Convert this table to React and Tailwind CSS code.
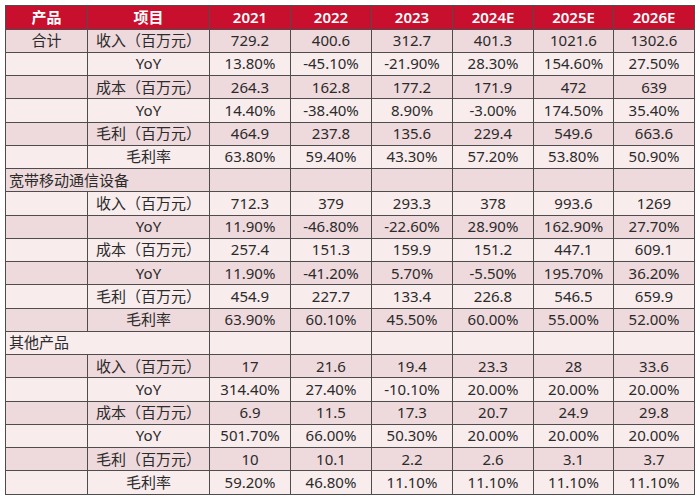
import React from "react";

const years = ["2021", "2022", "2023", "2024E", "2025E", "2026E"];

const rows = [
  { p: "合计", i: "收入（百万元）", v: ["729.2", "400.6", "312.7", "401.3", "1021.6", "1302.6"] },
  { p: "", i: "YoY", v: ["13.80%", "-45.10%", "-21.90%", "28.30%", "154.60%", "27.50%"] },
  { p: "", i: "成本（百万元）", v: ["264.3", "162.8", "177.2", "171.9", "472", "639"] },
  { p: "", i: "YoY", v: ["14.40%", "-38.40%", "8.90%", "-3.00%", "174.50%", "35.40%"] },
  { p: "", i: "毛利（百万元）", v: ["464.9", "237.8", "135.6", "229.4", "549.6", "663.6"] },
  { p: "", i: "毛利率", v: ["63.80%", "59.40%", "43.30%", "57.20%", "53.80%", "50.90%"] },
  { section: "宽带移动通信设备" },
  { p: "", i: "收入（百万元）", v: ["712.3", "379", "293.3", "378", "993.6", "1269"] },
  { p: "", i: "YoY", v: ["11.90%", "-46.80%", "-22.60%", "28.90%", "162.90%", "27.70%"] },
  { p: "", i: "成本（百万元）", v: ["257.4", "151.3", "159.9", "151.2", "447.1", "609.1"] },
  { p: "", i: "YoY", v: ["11.90%", "-41.20%", "5.70%", "-5.50%", "195.70%", "36.20%"] },
  { p: "", i: "毛利（百万元）", v: ["454.9", "227.7", "133.4", "226.8", "546.5", "659.9"] },
  { p: "", i: "毛利率", v: ["63.90%", "60.10%", "45.50%", "60.00%", "55.00%", "52.00%"] },
  { section: "其他产品" },
  { p: "", i: "收入（百万元）", v: ["17", "21.6", "19.4", "23.3", "28", "33.6"] },
  { p: "", i: "YoY", v: ["314.40%", "27.40%", "-10.10%", "20.00%", "20.00%", "20.00%"] },
  { p: "", i: "成本（百万元）", v: ["6.9", "11.5", "17.3", "20.7", "24.9", "29.8"] },
  { p: "", i: "YoY", v: ["501.70%", "66.00%", "50.30%", "20.00%", "20.00%", "20.00%"] },
  { p: "", i: "毛利（百万元）", v: ["10", "10.1", "2.2", "2.6", "3.1", "3.7"] },
  { p: "", i: "毛利率", v: ["59.20%", "46.80%", "11.10%", "11.10%", "11.10%", "11.10%"] },
];

const cell = "border border-[#4d4d4d] text-center p-0 leading-none";

export default function App() {
  return (
    <div
      className="w-[700px] h-[499px] bg-white pl-[5px] pt-[5px]"
      style={{ fontFamily: '"Noto Sans", "Noto Sans CJK SC", sans-serif' }}
    >
      <table className="table-fixed border-collapse w-[689px] text-[15px] text-[#2b2b2b]">
        <colgroup>
          <col className="w-[82px]" />
          <col className="w-[122px]" />
          <col className="w-[81px]" />
          <col className="w-[81px]" />
          <col className="w-[81px]" />
          <col className="w-[81px]" />
          <col className="w-[80px]" />
          <col className="w-[81px]" />
        </colgroup>
        <thead>
          <tr className="h-[23.5px] bg-[#c80f2e] text-white font-semibold">
            <th className={cell + " font-semibold"}>产品</th>
            <th className={cell + " font-semibold"}>项目</th>
            {years.map((y) => (
              <th key={y} className={cell + " font-semibold"}>{y}</th>
            ))}
          </tr>
        </thead>
        <tbody>
          {rows.map((r, idx) => {
            const bg = idx % 2 === 0 ? "bg-[#eed9dc]" : "bg-[#f8eced]";
            if (r.section) {
              return (
                <tr key={idx} className={"h-[23.25px] " + bg}>
                  <td colSpan={2} className="border border-[#4d4d4d] p-0 pl-[3px] text-left leading-none">
                    {r.section}
                  </td>
                  {years.map((y) => (
                    <td key={y} className={cell}></td>
                  ))}
                </tr>
              );
            }
            return (
              <tr key={idx} className={"h-[23.25px] " + bg}>
                <td className={cell}>{r.p}</td>
                <td className={cell}>{r.i}</td>
                {r.v.map((v, j) => (
                  <td key={j} className={cell}>{v}</td>
                ))}
              </tr>
            );
          })}
        </tbody>
      </table>
    </div>
  );
}
